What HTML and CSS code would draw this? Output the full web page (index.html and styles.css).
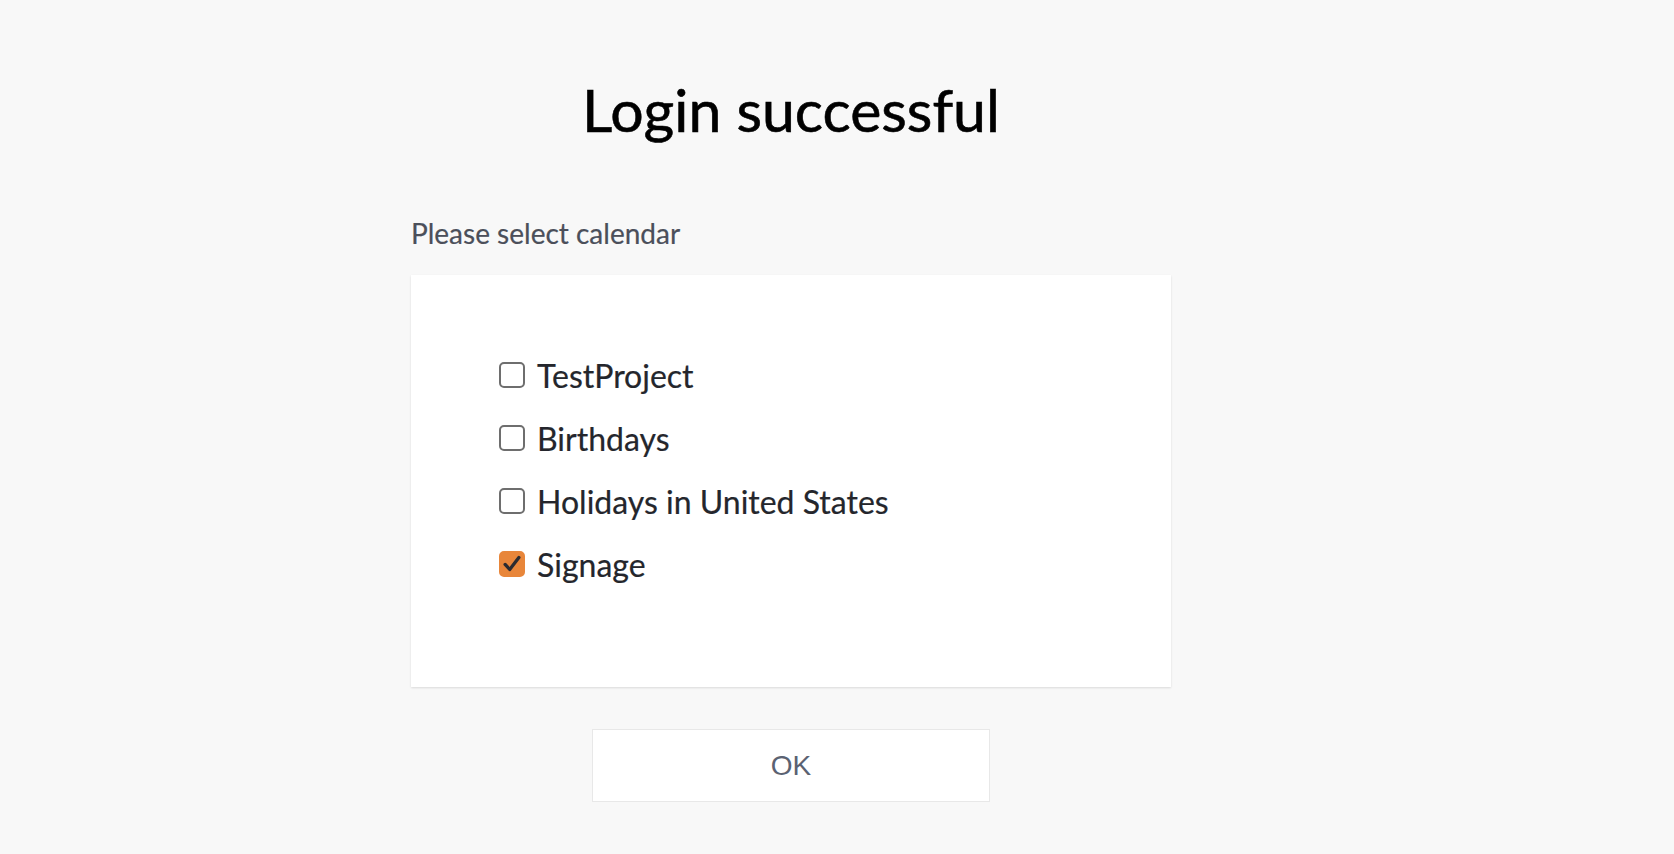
FILE: index.html
```html
<!DOCTYPE html>
<html lang="en">
<head>
<meta charset="utf-8">
<title>Login successful</title>
<link rel="stylesheet" href="styles.css">
</head>
<body>
<main class="page">
  <h1 class="title">Login successful</h1>
  <p class="prompt">Please select calendar</p>
  <section class="card">
    <ul class="list">
      <li class="item"><span class="box"></span><span class="label">TestProject</span></li>
      <li class="item"><span class="box"></span><span class="label">Birthdays</span></li>
      <li class="item"><span class="box"></span><span class="label">Holidays in United States</span></li>
      <li class="item"><span class="box checked"><svg viewBox="0 0 24 24" width="24" height="24"><path d="M4.5 12.5l5 5.5L19.5 5" fill="none" stroke="#2b2b30" stroke-width="3.6" stroke-linecap="round" stroke-linejoin="round"/></svg></span><span class="label">Signage</span></li>
    </ul>
  </section>
  <div class="actions"><button class="ok">OK</button></div>
</main>
</body>
</html>
```
FILE: styles.css
```css
html, body {
  margin: 0;
  padding: 0;
  background: #f8f8f8;
}
body {
  font-family: Lato, "Open Sans", sans-serif;
  color: #222;
}
.page {
  width: 760px;
  margin-left: 411px;
  display: flex;
  flex-direction: column;
}
.title {
  margin: 72px 0 0;
  font-size: 59px;
  font-weight: 400;
  line-height: 76px;
  text-align: center;
  color: #000;
  -webkit-text-stroke: 0.6px #000;
}
.prompt {
  margin: 68px 0 0;
  font-size: 28px;
  line-height: 34px;
  color: #4b4f5a;
  -webkit-text-stroke: 0.2px #4b4f5a;
}
.card {
  margin-top: 25px;
  background: #fff;
  height: 412px;
  box-shadow: 0 1px 2px rgba(0,0,0,0.12);
  box-sizing: border-box;
  padding: 83px 0 0 88px;
}
.list {
  list-style: none;
  margin: 0;
  padding: 0;
  display: flex;
  flex-direction: column;
  gap: 29px;
}
.item {
  display: flex;
  align-items: center;
  height: 34px;
}
.box {
  width: 26px;
  height: 26px;
  box-sizing: border-box;
  border: 2px solid #6e6e6e;
  border-radius: 5px;
  display: flex;
  align-items: center;
  justify-content: center;
  background: #fff;
  flex: none;
}
.box.checked {
  background: #e8863a;
  border-color: #e8863a;
}
.label {
  margin-left: 12px;
  font-size: 32px;
  color: #24262c;
  -webkit-text-stroke: 0.2px #24262c;
}
.actions {
  display: flex;
  justify-content: center;
  margin-top: 42px;
}
.ok {
  width: 398px;
  height: 73px;
  background: #fff;
  border: 1px solid #e8e8e8;
  font-family: "Liberation Sans", Arial, sans-serif;
  font-size: 28px;
  color: #5b6272;
  cursor: pointer;
}
```
